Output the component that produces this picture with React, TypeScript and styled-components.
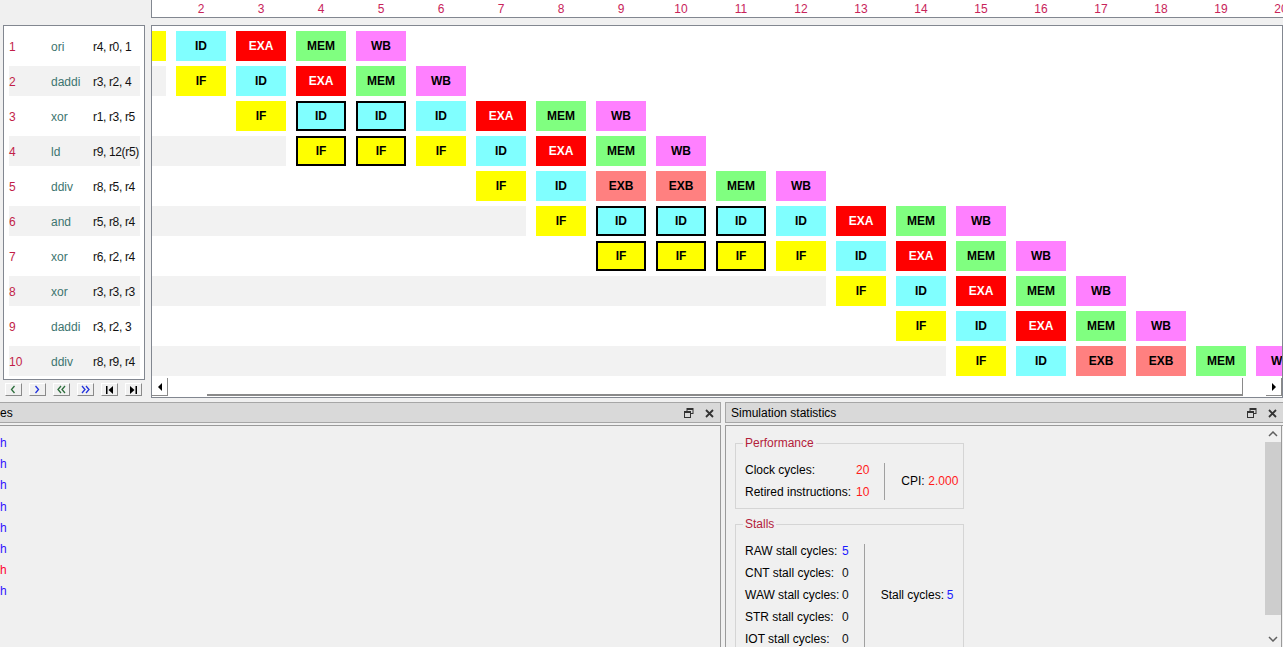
import React from 'react';
import styled, { createGlobalStyle } from 'styled-components';

// --- STYLES ---

const GlobalStyle = createGlobalStyle`
  html, body {
    margin: 0;
    padding: 0;
    background: #f0f0f0;
    overflow: hidden;
  }
  body {
    font-family: "Liberation Sans", Arial, sans-serif;
    font-size: 12px;
    color: #000;
  }
`;

const Screen = styled.div`
  width: 1283px;
  height: 647px;
  overflow: hidden;
  display: flex;
  flex-direction: column;
`;

const TopArea = styled.div`
  display: grid;
  grid-template-columns: 151px 1fr;
  height: 398px;
`;

const LeftColumn = styled.div`
  padding: 25px 0 0 3px;
  display: flex;
  flex-direction: column;
`;

const ListBox = styled.div`
  width: 142px;
  height: 355px;
  box-sizing: border-box;
  background: #fff;
  border: 1px solid #828790;
  padding: 5px 4px 0 5px;
  display: flex;
  flex-direction: column;
  gap: 5px;
  overflow: hidden;
`;

const ListRow = styled.div<{ $shaded: boolean }>`
  height: 30px;
  flex-shrink: 0;
  display: grid;
  grid-template-columns: 42px 42px 1fr;
  align-items: center;
  padding-top: 1px;
  box-sizing: border-box;
  background: ${p => (p.$shaded ? '#f2f2f2' : 'transparent')};
  white-space: nowrap;

  .num { color: #c21e48; }
  .op { color: #3d7570; }
  .args { color: #111; letter-spacing: -0.35px; }
`;

const NavRow = styled.div`
  display: flex;
  gap: 7px;
  margin: 3px 0 0 2px;
`;

const NavButton = styled.div`
  width: 17px;
  height: 13px;
  box-sizing: border-box;
  background: #f0f0f0;
  border-top: 1px solid #fff;
  border-left: 1px solid #fff;
  border-right: 1px solid #8a8a8a;
  border-bottom: 1px solid #8a8a8a;
  display: flex;
  align-items: center;
  justify-content: center;
`;

const RightColumn = styled.div`
  display: flex;
  flex-direction: column;
  min-width: 0;
`;

const HeaderStrip = styled.div`
  height: 18px;
  box-sizing: border-box;
  background: #fff;
  border-left: 1px solid #828790;
  border-bottom: 1px solid #828790;
  overflow: hidden;
  display: flex;
`;

const HeaderTrack = styled.div`
  display: flex;
  margin-left: -36px;
`;

const CycleNum = styled.div`
  width: 60px;
  flex-shrink: 0;
  padding: 2px 10px 0 0;
  box-sizing: border-box;
  text-align: center;
  line-height: 15px;
  color: #c8245a;
`;

const PipeBox = styled.div`
  margin-top: 7px;
  height: 373px;
  box-sizing: border-box;
  background: #fff;
  border: 1px solid #828790;
  display: flex;
  flex-direction: column;
  overflow: hidden;
`;

const PipeRows = styled.div`
  height: 352px;
  padding-top: 5px;
  box-sizing: border-box;
  display: flex;
  flex-direction: column;
  gap: 5px;
  overflow: hidden;
`;

const PipeRow = styled.div`
  height: 30px;
  flex-shrink: 0;
  display: flex;
  gap: 10px;
  margin-left: -36px;
`;

const Lead = styled.div<{ $cols: number; $shaded: boolean }>`
  width: ${p => p.$cols * 60 - 10}px;
  flex-shrink: 0;
  background: ${p => (p.$shaded ? '#f2f2f2' : 'transparent')};
`;

const stageColors: Record<string, { bg: string; fg: string }> = {
  IF: { bg: '#ffff00', fg: '#000' },
  ID: { bg: '#80ffff', fg: '#000' },
  EXA: { bg: '#ff0000', fg: '#fff' },
  EXB: { bg: '#ff8080', fg: '#000' },
  MEM: { bg: '#80ff80', fg: '#000' },
  WB: { bg: '#ff80ff', fg: '#000' },
};

const StageCell = styled.div<{ $stage: string; $stall: boolean }>`
  width: 50px;
  height: 30px;
  flex-shrink: 0;
  box-sizing: border-box;
  display: flex;
  align-items: center;
  justify-content: center;
  font-weight: bold;
  font-size: 12px;
  background: ${p => stageColors[p.$stage].bg};
  color: ${p => stageColors[p.$stage].fg};
  border: ${p => (p.$stall ? '2px solid #000' : 'none')};
`;

const HScroll = styled.div`
  height: 18px;
  display: flex;
  align-items: stretch;
  background: #fff;
`;

const ArrowBtn = styled.div`
  width: 16px;
  box-sizing: border-box;
  background: #fff;
  border-right: 1px solid #8a8a8a;
  border-bottom: 1px solid #8a8a8a;
  display: flex;
  align-items: center;
  justify-content: center;
`;

const HTrack = styled.div`
  flex: 1;
  display: flex;
  padding-left: 39px;
  padding-right: 23px;
`;

const HThumb = styled.div`
  flex: 1;
  box-sizing: border-box;
  border-right: 1px solid #8a8a8a;
  border-bottom: 2px solid #8a8a8a;
`;

const BottomArea = styled.div`
  flex: 1;
  display: flex;
  gap: 4px;
  padding-top: 4px;
  min-height: 0;
`;

const Panel = styled.div<{ $width?: number }>`
  display: flex;
  flex-direction: column;
  gap: 2px;
  ${p => (p.$width ? `width: ${p.$width}px; flex-shrink: 0;` : 'flex: 1; min-width: 0;')}
`;

const PanelHeader = styled.div`
  height: 21px;
  box-sizing: border-box;
  background: #d9d9d9;
  border: 1px solid #a6a6a6;
  border-left: none;
  display: flex;
  align-items: center;
  padding: 1px 5px 0 0;
  gap: 8px;
  white-space: nowrap;

  .title { flex: 1; }
`;

const RightHeader = styled(PanelHeader)`
  border-left: 1px solid #a6a6a6;
  border-right: none;
  padding-left: 5px;
`;

const HeaderIcon = styled.span`
  display: flex;
  width: 12px;
  justify-content: center;
`;

const PanelBody = styled.div`
  flex: 1;
  box-sizing: border-box;
  border: 1px solid #9a9a9a;
  border-left: none;
  border-bottom: none;
  background: #f0f0f0;
  padding-top: 7px;
  display: flex;
  flex-direction: column;
`;

const LogLine = styled.div<{ $error?: boolean }>`
  height: 21.2px;
  line-height: 21px;
  color: ${p => (p.$error ? '#ff0033' : '#3311ff')};
`;

const StatsBody = styled.div`
  flex: 1;
  box-sizing: border-box;
  border: 1px solid #9a9a9a;
  border-bottom: none;
  border-right: none;
  display: flex;
  min-height: 0;
`;

const StatsContent = styled.div`
  flex: 1;
  padding: 10px 0 0 9px;
  display: flex;
  flex-direction: column;
  gap: 8px;
`;

const GroupBox = styled.fieldset`
  width: 229px;
  box-sizing: border-box;
  margin: 0;
  border: 1px solid #d5d5d5;
  padding: 13px 0 8px 9px;
  display: flex;
  align-items: flex-start;

  legend {
    color: #b3213a;
    padding: 0 2px;
    margin-left: -2px;
    line-height: 14px;
  }
`;

const StatList = styled.div<{ $gap: number }>`
  display: flex;
  flex-direction: column;
  gap: ${p => p.$gap}px;
`;

const StatLine = styled.div<{ $labelWidth: number }>`
  display: flex;
  line-height: 14px;
  white-space: nowrap;

  .label { width: ${p => p.$labelWidth}px; }
`;

const SideStat = styled(StatLine)<{ $offset: number }>`
  margin-top: ${p => p.$offset}px;
`;

const Value = styled.span<{ $tone: 'red' | 'blue' | 'plain' }>`
  color: ${p => (p.$tone === 'red' ? '#ff1a1a' : p.$tone === 'blue' ? '#1a1aff' : '#111')};
`;

const Divider = styled.div<{ $height: number }>`
  width: 1px;
  height: ${p => p.$height}px;
  background: #a0a0a0;
  margin: 0 16px 0 15px;
`;

const VScroll = styled.div`
  width: 16px;
  margin-right: 1px;
  border-right: 1px solid #9a9a9a;
  display: flex;
  flex-direction: column;
  align-items: stretch;
`;

const VArrow = styled.div`
  height: 16px;
  display: flex;
  align-items: center;
  justify-content: center;
`;

const VThumb = styled.div`
  height: 173px;
  background: #cdcdcd;
`;

const VFill = styled.div`
  flex: 1;
`;

// --- DATA ---

type Stage = [string, boolean?];

interface Instr {
  op: string;
  args: string;
  start: number;
  stages: Stage[];
}

const program: Instr[] = [
  { op: 'ori', args: 'r4, r0, 1', start: 1, stages: [['IF'], ['ID'], ['EXA'], ['MEM'], ['WB']] },
  { op: 'daddi', args: 'r3, r2, 4', start: 2, stages: [['IF'], ['ID'], ['EXA'], ['MEM'], ['WB']] },
  { op: 'xor', args: 'r1, r3, r5', start: 3, stages: [['IF'], ['ID', true], ['ID', true], ['ID'], ['EXA'], ['MEM'], ['WB']] },
  { op: 'ld', args: 'r9, 12(r5)', start: 4, stages: [['IF', true], ['IF', true], ['IF'], ['ID'], ['EXA'], ['MEM'], ['WB']] },
  { op: 'ddiv', args: 'r8, r5, r4', start: 7, stages: [['IF'], ['ID'], ['EXB'], ['EXB'], ['MEM'], ['WB']] },
  { op: 'and', args: 'r5, r8, r4', start: 8, stages: [['IF'], ['ID', true], ['ID', true], ['ID', true], ['ID'], ['EXA'], ['MEM'], ['WB']] },
  { op: 'xor', args: 'r6, r2, r4', start: 9, stages: [['IF', true], ['IF', true], ['IF', true], ['IF'], ['ID'], ['EXA'], ['MEM'], ['WB']] },
  { op: 'xor', args: 'r3, r3, r3', start: 13, stages: [['IF'], ['ID'], ['EXA'], ['MEM'], ['WB']] },
  { op: 'daddi', args: 'r3, r2, 3', start: 14, stages: [['IF'], ['ID'], ['EXA'], ['MEM'], ['WB']] },
  { op: 'ddiv', args: 'r8, r9, r4', start: 15, stages: [['IF'], ['ID'], ['EXB'], ['EXB'], ['MEM'], ['WB']] },
];

const cycles = Array.from({ length: 20 }, (_, i) => i + 1);
const logLines = [false, false, false, false, false, false, true, false];

const stallRows: [string, string, 'blue' | 'plain'][] = [
  ['RAW stall cycles:', '5', 'blue'],
  ['CNT stall cycles:', '0', 'plain'],
  ['WAW stall cycles:', '0', 'plain'],
  ['STR stall cycles:', '0', 'plain'],
  ['IOT stall cycles:', '0', 'plain'],
];

// --- ICONS ---

const Chevron = ({ dir, color, double }: { dir: 'l' | 'r'; color: string; double?: boolean }) => {
  const single = dir === 'l' ? 'M6.5 2 L3.5 5.5 L6.5 9' : 'M3.5 2 L6.5 5.5 L3.5 9';
  const first = dir === 'l' ? 'M5 2 L2 5.5 L5 9' : 'M2 2 L5 5.5 L2 9';
  const second = dir === 'l' ? 'M9 2 L6 5.5 L9 9' : 'M6 2 L9 5.5 L6 9';
  return (
    <svg width="11" height="11" viewBox="0 0 11 11">
      <path d={double ? first : single} stroke={color} strokeWidth="1.3" fill="none" />
      {double && <path d={second} stroke={color} strokeWidth="1.3" fill="none" />}
    </svg>
  );
};

const EndArrow = ({ dir }: { dir: 'l' | 'r' }) => (
  <svg width="11" height="11" viewBox="0 0 11 11">
    {dir === 'l' ? (
      <>
        <rect x="2" y="2" width="1.5" height="8" fill="#000" />
        <path d="M9 2 L4.5 6 L9 10 Z" fill="#000" />
      </>
    ) : (
      <>
        <path d="M2 2 L6.5 6 L2 10 Z" fill="#000" />
        <rect x="7.5" y="2" width="1.5" height="8" fill="#000" />
      </>
    )}
  </svg>
);

const Tri = ({ dir }: { dir: 'l' | 'r' }) => (
  <svg width="6" height="8" viewBox="0 0 6 8">
    <path d={dir === 'l' ? 'M5 0 L1 4 L5 8 Z' : 'M1 0 L5 4 L1 8 Z'} fill="#000" />
  </svg>
);

const RestoreIcon = () => (
  <svg width="10" height="10" viewBox="0 0 10 10">
    <rect x="3" y="0.5" width="6" height="5" fill="none" stroke="#333" strokeWidth="1" />
    <rect x="3" y="0.5" width="6" height="1.5" fill="#333" />
    <rect x="0.5" y="3.5" width="6" height="6" fill="#d9d9d9" stroke="#333" strokeWidth="1" />
    <rect x="0.5" y="3.5" width="6" height="1.5" fill="#333" />
  </svg>
);

const CloseIcon = () => (
  <svg width="9" height="9" viewBox="0 0 9 9">
    <path d="M1 1 L8 8 M8 1 L1 8" stroke="#333" strokeWidth="1.8" />
  </svg>
);

const VChevron = ({ up }: { up?: boolean }) => (
  <svg width="10" height="6" viewBox="0 0 10 6">
    <path d={up ? 'M1 5 L5 1 L9 5' : 'M1 1 L5 5 L9 1'} stroke="#606060" strokeWidth="1.5" fill="none" />
  </svg>
);

// --- COMPONENT ---

export default function App() {
  return (
    <Screen>
      <GlobalStyle />
      <TopArea>
        <LeftColumn>
          <ListBox>
            {program.map((ins, i) => (
              <ListRow key={i} $shaded={i % 2 === 1}>
                <span className="num">{i + 1}</span>
                <span className="op">{ins.op}</span>
                <span className="args">{ins.args}</span>
              </ListRow>
            ))}
          </ListBox>
          <NavRow>
            <NavButton><Chevron dir="l" color="#2c6e3c" /></NavButton>
            <NavButton><Chevron dir="r" color="#2233dd" /></NavButton>
            <NavButton><Chevron dir="l" color="#2c6e3c" double /></NavButton>
            <NavButton><Chevron dir="r" color="#2233dd" double /></NavButton>
            <NavButton><EndArrow dir="l" /></NavButton>
            <NavButton><EndArrow dir="r" /></NavButton>
          </NavRow>
        </LeftColumn>

        <RightColumn>
          <HeaderStrip>
            <HeaderTrack>
              {cycles.map(c => (
                <CycleNum key={c}>{c}</CycleNum>
              ))}
            </HeaderTrack>
          </HeaderStrip>
          <PipeBox>
            <PipeRows>
              {program.map((ins, i) => (
                <PipeRow key={i}>
                  {ins.start > 1 && <Lead $cols={ins.start - 1} $shaded={i % 2 === 1} />}
                  {ins.stages.map(([name, stall], j) => (
                    <StageCell key={j} $stage={name} $stall={!!stall}>
                      {name}
                    </StageCell>
                  ))}
                </PipeRow>
              ))}
            </PipeRows>
            <HScroll>
              <ArrowBtn><Tri dir="l" /></ArrowBtn>
              <HTrack>
                <HThumb />
              </HTrack>
              <ArrowBtn><Tri dir="r" /></ArrowBtn>
            </HScroll>
          </PipeBox>
        </RightColumn>
      </TopArea>

      <BottomArea>
        <Panel $width={721}>
          <PanelHeader>
            <span className="title">es</span>
            <HeaderIcon><RestoreIcon /></HeaderIcon>
            <HeaderIcon><CloseIcon /></HeaderIcon>
          </PanelHeader>
          <PanelBody>
            {logLines.map((err, i) => (
              <LogLine key={i} $error={err}>h</LogLine>
            ))}
          </PanelBody>
        </Panel>

        <Panel>
          <RightHeader>
            <span className="title">Simulation statistics</span>
            <HeaderIcon><RestoreIcon /></HeaderIcon>
            <HeaderIcon><CloseIcon /></HeaderIcon>
          </RightHeader>
          <StatsBody>
            <StatsContent>
              <GroupBox>
                <legend>Performance</legend>
                <StatList $gap={8}>
                  <StatLine $labelWidth={111}>
                    <span className="label">Clock cycles:</span>
                    <Value $tone="red">20</Value>
                  </StatLine>
                  <StatLine $labelWidth={111}>
                    <span className="label">Retired instructions:</span>
                    <Value $tone="red">10</Value>
                  </StatLine>
                </StatList>
                <Divider $height={37} />
                <SideStat $labelWidth={27} $offset={11}>
                  <span className="label">CPI:</span>
                  <Value $tone="red">2.000</Value>
                </SideStat>
              </GroupBox>
              <GroupBox>
                <legend>Stalls</legend>
                <StatList $gap={8}>
                  {stallRows.map(([label, v, tone]) => (
                    <StatLine key={label} $labelWidth={97}>
                      <span className="label">{label}</span>
                      <Value $tone={tone}>{v}</Value>
                    </StatLine>
                  ))}
                </StatList>
                <Divider $height={104} />
                <SideStat $labelWidth={66} $offset={44}>
                  <span className="label">Stall cycles:</span>
                  <Value $tone="blue">5</Value>
                </SideStat>
              </GroupBox>
            </StatsContent>
            <VScroll>
              <VArrow><VChevron up /></VArrow>
              <VThumb />
              <VFill />
              <VArrow><VChevron /></VArrow>
            </VScroll>
          </StatsBody>
        </Panel>
      </BottomArea>
    </Screen>
  );
}
